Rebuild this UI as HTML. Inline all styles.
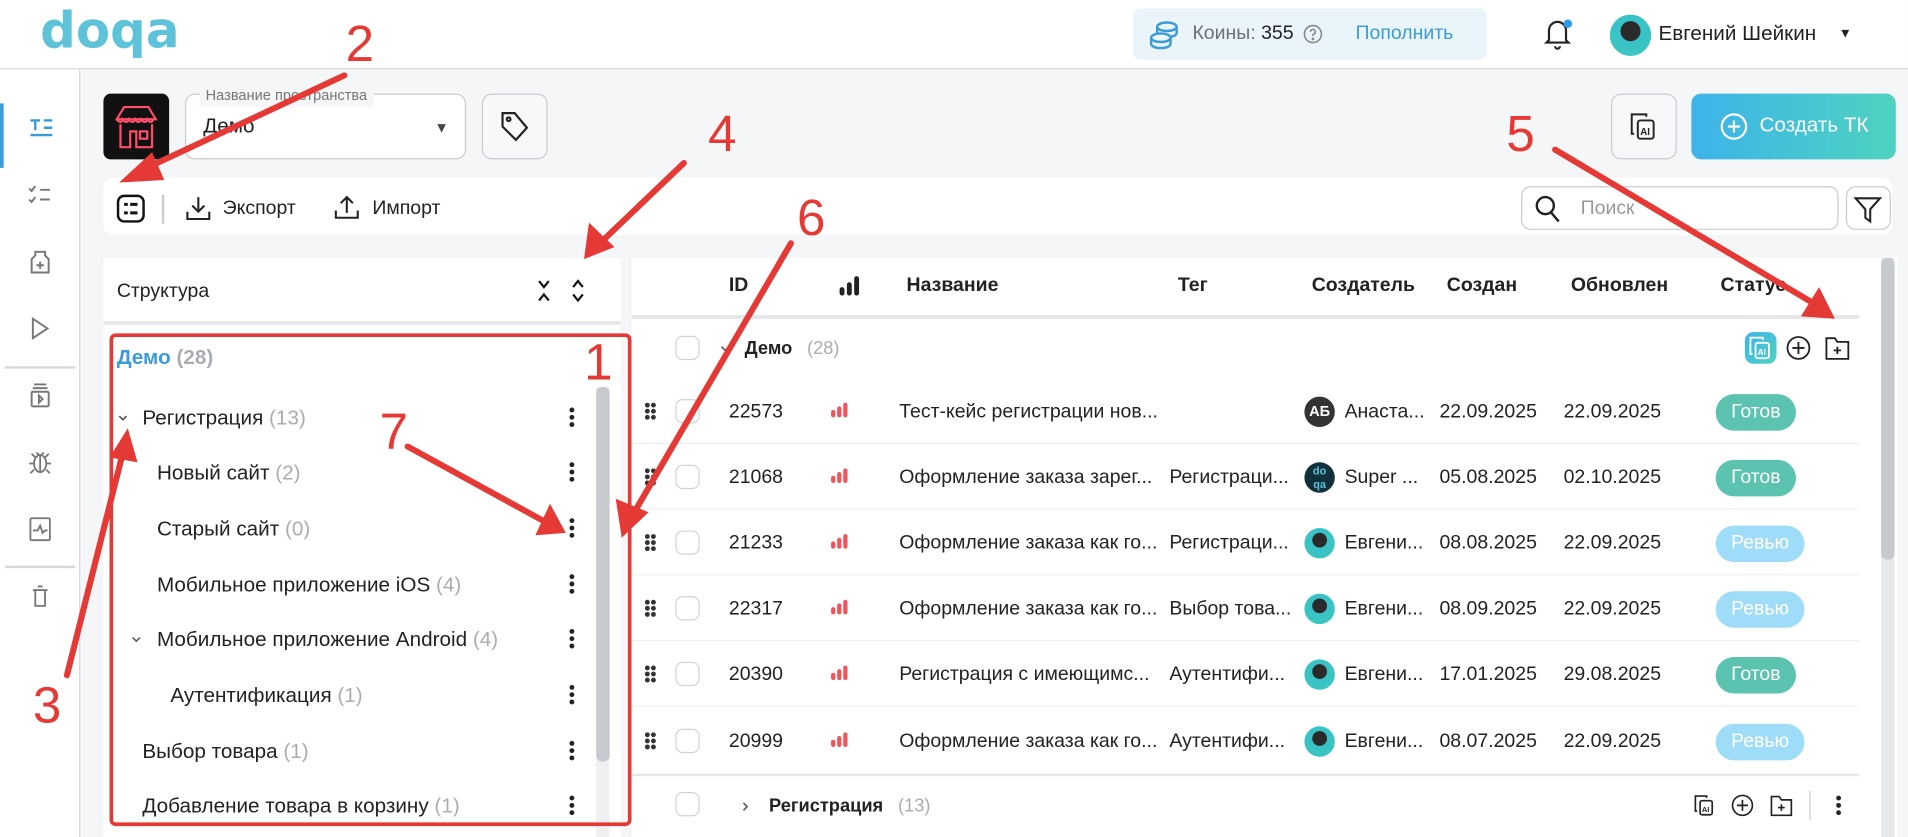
<!DOCTYPE html>
<html><head><meta charset="utf-8">
<style>
*{box-sizing:border-box;margin:0;padding:0}
html,body{width:1908px;height:837px;overflow:hidden;background:#fff;font-family:"Liberation Sans","DejaVu Sans",sans-serif;color:#222}
#s{position:absolute;left:0;top:0;width:1568px;height:688px;transform:scale(1.2168,1.2166);transform-origin:0 0;background:#f5f6f8;overflow:hidden}
.a{position:absolute}
.t{position:absolute;white-space:nowrap;font-size:16px;line-height:20px}
.g{color:#a9adb3}
.dots{position:absolute;width:4px}
.dots i{display:block;width:4px;height:4px;border-radius:2px;background:#222;margin-bottom:2px}
.cb{position:absolute;width:20px;height:20px;border:1.5px solid #cfd3d8;border-radius:6px;background:#fff}
.pill{position:absolute;height:30px;border-radius:15px;color:#fff;font-size:16px;line-height:30px;text-align:center}
.ok{background:#5bc3b0;width:66px}
.rv{background:#9fdcf8;width:73px}
.av{position:absolute;width:25px;height:25px;border-radius:50%;background:radial-gradient(circle at 50% 40%,#2a2a2a 30%,#39c2c9 32%,#3ac7b9)}
.row{position:absolute;left:519px;width:1009px;height:54px;border-bottom:1px solid #eef0f2}
.hd{position:absolute;top:226px;font-weight:bold;font-size:16px}
.chv{position:absolute}
</style></head><body><div id="s">

<!-- header -->
<div class="a" style="left:0;top:0;width:1568px;height:57px;background:#fff;border-bottom:1px solid #d5d8dc"></div>
<div class="t" style="left:33px;top:2px;font-size:41px;line-height:46px;font-weight:900;color:#5ec3d8;letter-spacing:0px;font-family:'DejaVu Sans',sans-serif">doqa</div>
<div class="a" style="left:931px;top:7px;width:291px;height:42px;background:#eaf4fb;border-radius:6px"></div>
<svg class="a" style="left:944px;top:16px" width="26" height="26" viewBox="0 0 26 26" fill="none" stroke="#3a9bd8" stroke-width="2"><ellipse cx="15" cy="6" rx="8" ry="3.5"/><path d="M7 6v5c0 2 3.5 3.5 8 3.5s8-1.5 8-3.5V6"/><ellipse cx="10" cy="15" rx="8" ry="3.5" fill="#eaf4fb"/><path d="M2 15v5c0 2 3.5 3.5 8 3.5s8-1.5 8-3.5v-5"/></svg>
<div class="t" style="left:980px;top:18px;color:#6b7177">Коины: <span style="color:#222">355</span></div>
<svg class="a" style="left:1071px;top:20px" width="16" height="16" viewBox="0 0 16 16" fill="none" stroke="#888" stroke-width="1.3"><circle cx="8" cy="8" r="7"/><path d="M6 6.2a2 2 0 1 1 2.5 1.9c-.4.2-.5.5-.5 1v.6"/><circle cx="8" cy="12" r=".5" fill="#888"/></svg>
<div class="t" style="left:1114px;top:18px;color:#3a9bd8">Пополнить</div>
<svg class="a" style="left:1268px;top:14px" width="24" height="28" viewBox="0 0 24 28" fill="none" stroke="#222" stroke-width="1.8"><path d="M5 19V11a7 7 0 0 1 14 0v8l2 2H3z"/><path d="M10 24a2 2 0 0 0 4 0"/></svg>
<div class="a" style="left:1285px;top:16px;width:7px;height:7px;border-radius:50%;background:#2e9be6"></div>
<div class="av" style="left:1323px;top:12px;width:34px;height:34px"></div>
<div class="t" style="left:1363px;top:18px;font-size:17px;color:#222">Евгений Шейкин</div>
<div class="t" style="left:1511px;top:18px;font-size:11px">▼</div>

<!-- sidebar -->
<div class="a" style="left:0;top:57px;width:66px;height:631px;background:#fff;border-right:1px solid #d5d8dc"></div>
<div class="a" style="left:0;top:85px;width:3px;height:53px;background:#3a9bd8"></div>
<svg class="a" style="left:23px;top:95px" width="22" height="20" viewBox="0 0 22 20" stroke="#3a9bd8" stroke-width="2"><path d="M2 4h8M6 4v8M13 4h7M13 10h7M2 16h18"/></svg>
<svg class="a" style="left:23px;top:152px" width="20" height="16" viewBox="0 0 20 16" fill="none" stroke="#777" stroke-width="1.6"><path d="M1 3l2 2 3-4M1 12l2 2 3-4M10 4h8M10 12h8"/></svg>
<svg class="a" style="left:24px;top:204px" width="18" height="22" viewBox="0 0 18 22" fill="none" stroke="#777" stroke-width="1.6"><path d="M5 3h8v3l3 3v11H2V9l3-3z"/><path d="M9 11v6M6 14h6"/></svg>
<svg class="a" style="left:25px;top:260px" width="16" height="20" viewBox="0 0 16 20" fill="none" stroke="#777" stroke-width="1.6"><path d="M2 2l12 8-12 8z"/></svg>
<div class="a" style="left:4px;top:301px;width:58px;height:1.5px;background:#d5d8dc"></div>
<svg class="a" style="left:24px;top:314px" width="18" height="22" viewBox="0 0 18 22" fill="none" stroke="#777" stroke-width="1.6"><path d="M4 2h10M3 5h12"/><rect x="2" y="8" width="14" height="12" rx="1"/><path d="M8 11l3 3-3 3z"/></svg>
<svg class="a" style="left:23px;top:369px" width="20" height="22" viewBox="0 0 20 22" fill="none" stroke="#777" stroke-width="1.5"><ellipse cx="10" cy="12" rx="5" ry="7"/><path d="M10 5v14M5 12H1M19 12h-4M6 7L3 4M14 7l3-3M5 17l-3 3M15 17l3 3M7 3l2 2M13 3l-2 2"/></svg>
<svg class="a" style="left:24px;top:424px" width="18" height="22" viewBox="0 0 18 22" fill="none" stroke="#777" stroke-width="1.5"><rect x="1" y="2" width="16" height="18" rx="1"/><path d="M3 12h4l2-4 2 6 2-2h2"/></svg>
<div class="a" style="left:4px;top:465px;width:58px;height:1.5px;background:#d5d8dc"></div>
<svg class="a" style="left:25px;top:480px" width="16" height="20" viewBox="0 0 16 20" fill="none" stroke="#777" stroke-width="1.5"><path d="M6 2h4M2 5h12M4 5v13h8V5"/></svg>

<!-- top controls -->
<div class="a" style="left:85px;top:77px;width:54px;height:54px;background:#111;border-radius:6px"></div>
<svg class="a" style="left:91px;top:83px" width="42" height="42" viewBox="0 0 42 42" fill="none" stroke="#ff4d6a" stroke-width="1.8"><path d="M11 5h20l6 10H5z"/><path d="M5 15c2 3 4 3 5 0c2 3 4 3 5 0c2 3 4 3 5 0c2 3 4 3 5 0c2 3 4 3 5 0c2 3 4 3 5 0"/><path d="M8 19v19h8V25h5v13h13V19"/><rect x="24" y="25" width="6" height="6"/></svg>
<div class="a" style="left:152px;top:77px;width:231px;height:54px;border:1px solid #c8ccd1;border-radius:8px;background:#fff"></div>
<div class="t" style="left:164px;top:68px;font-size:12px;color:#777;background:#f5f6f8;padding:0 5px">Название пространства</div>
<div class="t" style="left:167px;top:94px;font-size:17px">Демо</div>
<div class="t" style="left:357px;top:95px;font-size:12px;color:#444">▼</div>
<div class="a" style="left:396px;top:77px;width:54px;height:54px;border:1px solid #c8ccd1;border-radius:8px;background:#f7f8f9"></div>
<svg class="a" style="left:410px;top:90px" width="26" height="28" viewBox="0 0 26 28" fill="none" stroke="#222" stroke-width="1.8"><path d="M3 3h10l10 12-9 10L3 14z"/><circle cx="8" cy="8" r="1.5"/></svg>
<div class="a" style="left:1324px;top:77px;width:54px;height:54px;border:1px solid #c8ccd1;border-radius:8px;background:#f7f8f9"></div>
<svg class="a" style="left:1338px;top:91px" width="26" height="26" viewBox="0 0 26 26" fill="none" stroke="#222" stroke-width="1.6"><path d="M5 19H3V3h12v2"/><rect x="8" y="8" width="13" height="15" rx="2"/><text x="10" y="20" font-size="8" font-weight="bold" fill="#222" stroke="none" font-family="Liberation Sans">AI</text></svg>
<div class="a" style="left:1390px;top:77px;width:168px;height:54px;border-radius:8px;background:linear-gradient(90deg,#3db3ea,#4fd2bf)"></div>
<svg class="a" style="left:1413px;top:92px" width="24" height="24" viewBox="0 0 24 24" fill="none" stroke="#fff" stroke-width="1.8"><circle cx="12" cy="12" r="10"/><path d="M12 7v10M7 12h10"/></svg>
<div class="t" style="left:1446px;top:93px;color:#fff;font-size:17px">Создать ТК</div>

<!-- toolbar -->
<div class="a" style="left:85px;top:146px;width:1470px;height:47px;background:#fff;border-radius:8px"></div>
<svg class="a" style="left:95px;top:159px" width="25" height="25" viewBox="0 0 25 25" fill="none" stroke="#111" stroke-width="2"><rect x="2" y="2" width="21" height="21" rx="5"/><path d="M7 9h3M7 16h3M12 9h6M12 16h6" stroke-width="2.5"/></svg>
<div class="a" style="left:133px;top:160px;width:1.5px;height:24px;background:#ccc"></div>
<svg class="a" style="left:152px;top:160px" width="22" height="22" viewBox="0 0 22 22" fill="none" stroke="#222" stroke-width="1.7"><path d="M11 2v12M6 9l5 5 5-5M2 14v6h18v-6"/></svg>
<div class="t" style="left:183px;top:162px">Экспорт</div>
<svg class="a" style="left:274px;top:159px" width="22" height="22" viewBox="0 0 22 22" fill="none" stroke="#222" stroke-width="1.7"><path d="M11 16V3M6 8l5-5 5 5M2 14v6h18v-6"/></svg>
<div class="t" style="left:306px;top:162px">Импорт</div>
<div class="a" style="left:1250px;top:153px;width:261px;height:36px;border:1px solid #c8ccd1;border-radius:8px;background:#fff"></div>
<svg class="a" style="left:1261px;top:160px" width="22" height="24" viewBox="0 0 22 24" fill="none" stroke="#222" stroke-width="2"><circle cx="9" cy="9" r="7"/><path d="M14 15l6 7"/></svg>
<div class="t" style="left:1299px;top:162px;color:#999">Поиск</div>
<div class="a" style="left:1517px;top:153px;width:37px;height:36px;border:1px solid #c8ccd1;border-radius:8px;background:#fff"></div>
<svg class="a" style="left:1523px;top:160px" width="24" height="24" viewBox="0 0 24 24" fill="none" stroke="#222" stroke-width="1.7"><path d="M2 3h20l-8 9v10l-4-3v-7z"/></svg>

<!-- structure panel -->
<div class="a" style="left:85px;top:212px;width:425px;height:476px;background:#fff"></div>
<div class="t" style="left:96px;top:230px;font-size:16px">Структура</div>
<svg class="a" style="left:440px;top:228px" width="46" height="22" viewBox="0 0 46 22" fill="none" stroke="#111" stroke-width="1.8"><path d="M3 3l4 5 4-5M3 19l4-5 4 5M31 8l4-5 4 5M31 14l4 5 4-5"/></svg>
<div class="a" style="left:85px;top:264px;width:425px;height:3px;background:#e3e7ea"></div>
<div class="t" style="left:96px;top:284px;font-size:17px;font-weight:bold;color:#3a9bd8">Демо <span class="g">(28)</span></div>
<svg class="chv" style="left:96px;top:340px" width="10" height="8" viewBox="0 0 10 8" fill="none" stroke="#555" stroke-width="1.3"><path d="M2 2l3 3 3-3"/></svg>
<div class="t" style="left:117px;top:334px;font-size:17px">Регистрация <span class="g">(13)</span></div>
<div class="t" style="left:129px;top:379px;font-size:17px">Новый сайт <span class="g">(2)</span></div>
<div class="t" style="left:129px;top:425px;font-size:17px">Старый сайт <span class="g">(0)</span></div>
<div class="t" style="left:129px;top:471px;font-size:17px">Мобильное приложение iOS <span class="g">(4)</span></div>
<svg class="chv" style="left:107px;top:522px" width="10" height="8" viewBox="0 0 10 8" fill="none" stroke="#555" stroke-width="1.3"><path d="M2 2l3 3 3-3"/></svg>
<div class="t" style="left:129px;top:516px;font-size:17px">Мобильное приложение Android <span class="g">(4)</span></div>
<div class="t" style="left:140px;top:562px;font-size:17px">Аутентификация <span class="g">(1)</span></div>
<div class="t" style="left:117px;top:608px;font-size:17px">Выбор товара <span class="g">(1)</span></div>
<div class="t" style="left:117px;top:653px;font-size:17px">Добавление товара в корзину <span class="g">(1)</span></div>
<div class="dots" style="left:468px;top:335px"><i></i><i></i><i></i></div>
<div class="dots" style="left:468px;top:380px"><i></i><i></i><i></i></div>
<div class="dots" style="left:468px;top:426px"><i></i><i></i><i></i></div>
<div class="dots" style="left:468px;top:472px"><i></i><i></i><i></i></div>
<div class="dots" style="left:468px;top:517px"><i></i><i></i><i></i></div>
<div class="dots" style="left:468px;top:563px"><i></i><i></i><i></i></div>
<div class="dots" style="left:468px;top:609px"><i></i><i></i><i></i></div>
<div class="dots" style="left:468px;top:654px"><i></i><i></i><i></i></div>
<div class="a" style="left:490px;top:318px;width:11px;height:370px;background:#eef0f2"></div>
<div class="a" style="left:490px;top:318px;width:11px;height:308px;border-radius:5px;background:#c6c9ce"></div>

<!-- table -->
<div class="a" style="left:519px;top:212px;width:1040px;height:476px;background:#fff"></div>
<div class="hd" style="left:599px">ID</div>
<svg class="a" style="left:689px;top:227px" width="18" height="16" viewBox="0 0 18 16" fill="#222"><rect x="1" y="9" width="4" height="7" rx="2"/><rect x="7" y="5" width="4" height="11" rx="2"/><rect x="13" y="0" width="4" height="16" rx="2"/></svg>
<div class="hd" style="left:745px">Название</div>
<div class="hd" style="left:968px">Тег</div>
<div class="hd" style="left:1078px">Создатель</div>
<div class="hd" style="left:1189px">Создан</div>
<div class="hd" style="left:1291px">Обновлен</div>
<div class="hd" style="left:1414px">Статус</div>
<div class="a" style="left:519px;top:259px;width:1009px;height:3px;background:#e3e7ea"></div>
<div class="cb" style="left:555px;top:276px"></div>
<svg class="chv" style="left:591px;top:283px" width="10" height="8" viewBox="0 0 10 8" fill="none" stroke="#555" stroke-width="1.3"><path d="M2 2l3 3 3-3"/></svg>
<div class="t" style="left:612px;top:277px;font-weight:bold;font-size:15px">Демо <span class="g" style="font-weight:normal;margin-left:8px">(28)</span></div>
<div class="a" style="left:1434px;top:273px;width:26px;height:26px;border-radius:7px;background:linear-gradient(135deg,#3db3ea,#4fd2bf)"></div>
<svg class="a" style="left:1436px;top:275px" width="22" height="22" viewBox="0 0 26 26" fill="none" stroke="#fff" stroke-width="1.8"><path d="M5 19H3V3h12v2"/><rect x="8" y="8" width="13" height="15" rx="2"/><text x="10" y="20" font-size="8" font-weight="bold" fill="#fff" stroke="none" font-family="Liberation Sans">AI</text></svg>
<svg class="a" style="left:1467px;top:275px" width="22" height="22" viewBox="0 0 22 22" fill="none" stroke="#222" stroke-width="1.5"><circle cx="11" cy="11" r="9"/><path d="M11 6v10M6 11h10"/></svg>
<svg class="a" style="left:1499px;top:275px" width="22" height="22" viewBox="0 0 22 22" fill="none" stroke="#222" stroke-width="1.5"><path d="M2 3h7l2 3h9v14H2z"/><path d="M11 10v6M8 13h6"/></svg>

<div class="row" style="top:311px"></div>
<div class="row" style="top:365px"></div>
<div class="row" style="top:419px"></div>
<div class="row" style="top:473px"></div>
<div class="row" style="top:527px"></div>
<div class="row" style="top:581px;height:57px;border-bottom:2px solid #e3e7ea"></div>

<div class="cb" style="left:555px;top:651px"></div>
<svg class="chv" style="left:609px;top:658px" width="8" height="10" viewBox="0 0 8 10" fill="none" stroke="#555" stroke-width="1.3"><path d="M2 2l3 3-3 3"/></svg>
<div class="t" style="left:632px;top:653px;font-weight:bold;font-size:15px">Регистрация <span class="g" style="font-weight:normal;margin-left:8px">(13)</span></div>
<svg class="a" style="left:1391px;top:652px" width="20" height="20" viewBox="0 0 26 26" fill="none" stroke="#222" stroke-width="1.8"><path d="M5 19H3V3h12v2"/><rect x="8" y="8" width="13" height="15" rx="2"/><text x="10" y="20" font-size="8" font-weight="bold" fill="#222" stroke="none" font-family="Liberation Sans">AI</text></svg>
<svg class="a" style="left:1422px;top:652px" width="20" height="20" viewBox="0 0 22 22" fill="none" stroke="#222" stroke-width="1.5"><circle cx="11" cy="11" r="9"/><path d="M11 6v10M6 11h10"/></svg>
<svg class="a" style="left:1454px;top:652px" width="20" height="20" viewBox="0 0 22 22" fill="none" stroke="#222" stroke-width="1.5"><path d="M2 3h7l2 3h9v14H2z"/><path d="M11 10v6M8 13h6"/></svg>
<div class="a" style="left:1487px;top:650px;width:1px;height:24px;background:#ccc"></div>
<div class="dots" style="left:1509px;top:654px"><i></i><i></i><i></i></div>

<div class="a" style="left:1546px;top:212px;width:11px;height:476px;background:#e6e9ec"></div>
<div class="a" style="left:1546px;top:212px;width:11px;height:248px;border-radius:5px;background:#c6c9ce"></div>

<!-- rows content -->
<div class="t" style="left:599px;top:329px">22573</div><div class="t" style="left:739px;top:329px">Тест-кейс регистрации нов...</div>
<div class="a" style="left:1072px;top:326px;width:25px;height:25px;border-radius:50%;background:#333;color:#fff;font-size:12px;font-weight:bold;line-height:25px;text-align:center">АБ</div><div class="t" style="left:1105px;top:329px">Анаста...</div><div class="t" style="left:1183px;top:329px">22.09.2025</div><div class="t" style="left:1285px;top:329px">22.09.2025</div><div class="pill ok" style="left:1410px;top:324px">Готов</div>

<div class="t" style="left:599px;top:383px">21068</div><div class="t" style="left:739px;top:383px">Оформление заказа зарег...</div><div class="t" style="left:961px;top:383px">Регистраци...</div>
<div class="a" style="left:1072px;top:380px;width:25px;height:25px;border-radius:50%;background:#10303c;color:#5ec3d8;font-size:9px;font-weight:bold;line-height:11px;text-align:center;padding-top:2px">do<br>qa</div><div class="t" style="left:1105px;top:383px">Super ...</div><div class="t" style="left:1183px;top:383px">05.08.2025</div><div class="t" style="left:1285px;top:383px">02.10.2025</div><div class="pill ok" style="left:1410px;top:378px">Готов</div>

<div class="t" style="left:599px;top:437px">21233</div><div class="t" style="left:739px;top:437px">Оформление заказа как го...</div><div class="t" style="left:961px;top:437px">Регистраци...</div>
<div class="av" style="left:1072px;top:434px"></div><div class="t" style="left:1105px;top:437px">Евгени...</div><div class="t" style="left:1183px;top:437px">08.08.2025</div><div class="t" style="left:1285px;top:437px">22.09.2025</div><div class="pill rv" style="left:1410px;top:432px">Ревью</div>

<div class="t" style="left:599px;top:491px">22317</div><div class="t" style="left:739px;top:491px">Оформление заказа как го...</div><div class="t" style="left:961px;top:491px">Выбор това...</div>
<div class="av" style="left:1072px;top:488px"></div><div class="t" style="left:1105px;top:491px">Евгени...</div><div class="t" style="left:1183px;top:491px">08.09.2025</div><div class="t" style="left:1285px;top:491px">22.09.2025</div><div class="pill rv" style="left:1410px;top:486px">Ревью</div>

<div class="t" style="left:599px;top:545px">20390</div><div class="t" style="left:739px;top:545px">Регистрация с имеющимс...</div><div class="t" style="left:961px;top:545px">Аутентифи...</div>
<div class="av" style="left:1072px;top:542px"></div><div class="t" style="left:1105px;top:545px">Евгени...</div><div class="t" style="left:1183px;top:545px">17.01.2025</div><div class="t" style="left:1285px;top:545px">29.08.2025</div><div class="pill ok" style="left:1410px;top:540px">Готов</div>

<div class="t" style="left:599px;top:600px">20999</div><div class="t" style="left:739px;top:600px">Оформление заказа как го...</div><div class="t" style="left:961px;top:600px">Аутентифи...</div>
<div class="av" style="left:1072px;top:597px"></div><div class="t" style="left:1105px;top:600px">Евгени...</div><div class="t" style="left:1183px;top:600px">08.07.2025</div><div class="t" style="left:1285px;top:600px">22.09.2025</div><div class="pill rv" style="left:1410px;top:595px">Ревью</div>

<svg class="a" style="left:0;top:0" width="1568" height="688">
<defs><g id="dh" fill="#333"><circle cx="0" cy="0" r="2"/><circle cx="5" cy="0" r="2"/><circle cx="0" cy="5" r="2"/><circle cx="5" cy="5" r="2"/><circle cx="0" cy="10" r="2"/><circle cx="5" cy="10" r="2"/></g>
<g id="br" fill="#f2545b"><rect x="0" y="6" width="3.5" height="6" rx="1.7"/><rect x="5" y="3" width="3.5" height="9" rx="1.7"/><rect x="10" y="0" width="3.5" height="12" rx="1.7"/></g></defs>
<use href="#dh" x="532" y="333"/><use href="#dh" x="532" y="387"/><use href="#dh" x="532" y="441"/><use href="#dh" x="532" y="495"/><use href="#dh" x="532" y="549"/><use href="#dh" x="532" y="604"/>
<use href="#br" x="683" y="331"/><use href="#br" x="683" y="385"/><use href="#br" x="683" y="439"/><use href="#br" x="683" y="493"/><use href="#br" x="683" y="547"/><use href="#br" x="683" y="602"/>
</svg>
<div class="cb" style="left:555px;top:328px"></div><div class="cb" style="left:555px;top:382px"></div><div class="cb" style="left:555px;top:436px"></div><div class="cb" style="left:555px;top:490px"></div><div class="cb" style="left:555px;top:544px"></div><div class="cb" style="left:555px;top:599px"></div>

<!-- annotations -->
<div class="a" style="left:90px;top:274px;width:429px;height:405px;border:3px solid #e53935;border-radius:5px"></div>
<svg class="a" style="left:0;top:0" width="1568" height="688" stroke="#e53935" stroke-width="5" fill="#e53935" stroke-linecap="round">
<line x1="283" y1="62" x2="112" y2="142"/><polygon stroke="none" points="98,150 125,125 135,148"/>
<line x1="562" y1="134" x2="493" y2="200"/><polygon stroke="none" points="480,213 484,183 505,203"/>
<line x1="650" y1="200" x2="519" y2="425"/><polygon stroke="none" points="511,442 506,410 533,421"/>
<line x1="1278" y1="123" x2="1495" y2="252"/><polygon stroke="none" points="1508,262 1480,260 1495,236"/>
<line x1="55" y1="555" x2="101" y2="372"/><polygon stroke="none" points="105,352 113,380 90,376"/>
<line x1="335" y1="367" x2="450" y2="430"/><polygon stroke="none" points="465,438 440,440 452,414"/>
</svg>
<div class="t" style="left:480px;top:276px;font-size:42px;line-height:44px;color:#e53935">1</div>
<div class="t" style="left:284px;top:14px;font-size:42px;line-height:44px;color:#e53935">2</div>
<div class="t" style="left:27px;top:558px;font-size:42px;line-height:44px;color:#e53935">3</div>
<div class="t" style="left:582px;top:88px;font-size:42px;line-height:44px;color:#e53935">4</div>
<div class="t" style="left:1238px;top:88px;font-size:42px;line-height:44px;color:#e53935">5</div>
<div class="t" style="left:655px;top:157px;font-size:42px;line-height:44px;color:#e53935">6</div>
<div class="t" style="left:312px;top:333px;font-size:42px;line-height:44px;color:#e53935">7</div>
</div></body></html>
